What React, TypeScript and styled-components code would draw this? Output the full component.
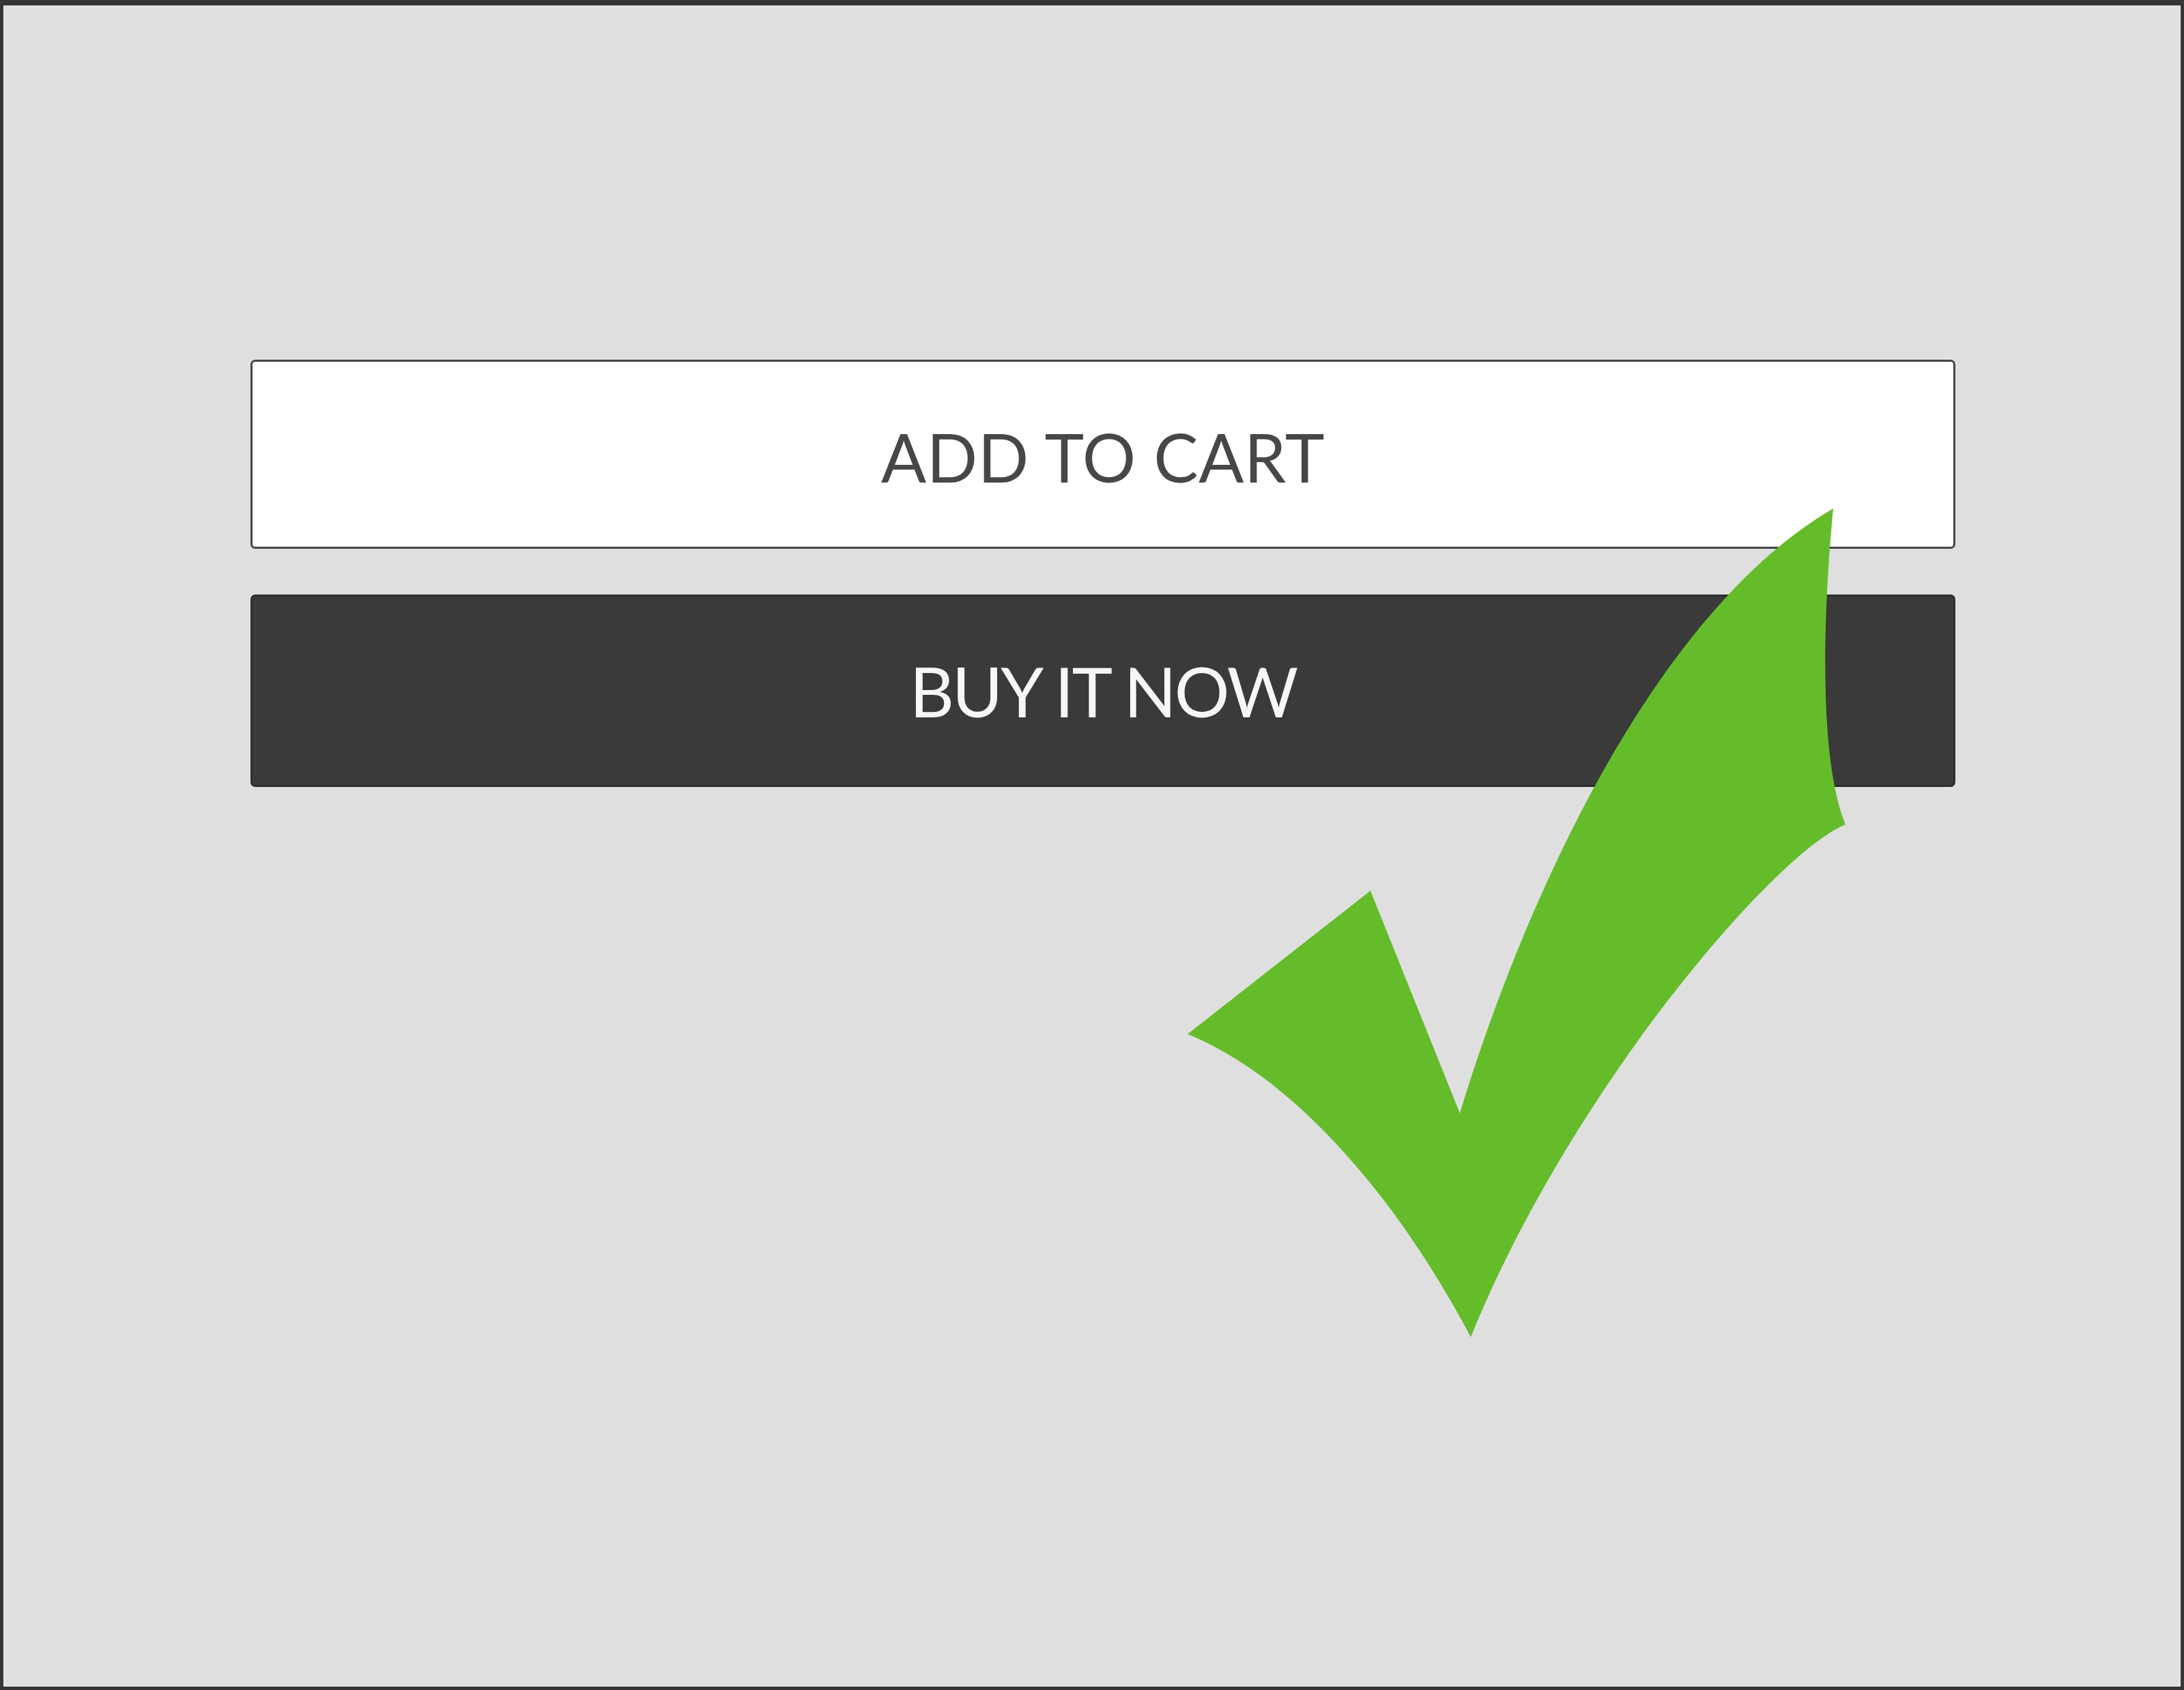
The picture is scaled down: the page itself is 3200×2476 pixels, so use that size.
import React from 'react';
import styled, { createGlobalStyle } from 'styled-components';

const GlobalStyle = createGlobalStyle`
  html, body {
    margin: 0;
    padding: 0;
    background: #dfdfdf;
  }
`;

const Frame = styled.div`
  position: relative;
  box-sizing: border-box;
  width: 3200px;
  height: 2476px;
  background: #dfdfdf;
  border-style: solid;
  border-color: #363636;
  border-width: 8px 5px 5px 5px;
  box-shadow: inset 0 0 0 2px #e9e9e9;
  overflow: hidden;
`;

const ButtonStack = styled.div`
  display: flex;
  flex-direction: column;
  gap: 67px;
  padding: 519px 330px 0 362px;
`;

const ActionButton = styled.button<{ $primary?: boolean }>`
  display: flex;
  align-items: center;
  justify-content: center;
  box-sizing: border-box;
  width: 100%;
  height: ${(p) => (p.$primary ? '282px' : '277px')};
  margin: 0;
  padding: ${(p) => (p.$primary ? '0' : '6px 0 0')};
  border: 3px solid ${(p) => (p.$primary ? '#2e2e2e' : '#454545')};
  border-radius: 7px;
  background: ${(p) => (p.$primary ? '#3a3a3a' : '#ffffff')};
  color: ${(p) => (p.$primary ? '#f7f7f7' : '#474747')};
  font-family: Lato, 'Open Sans', sans-serif;
  font-weight: 400;
  font-size: ${(p) => (p.$primary ? '101px' : '98px')};
  letter-spacing: ${(p) => (p.$primary ? '-0.03em' : '0.005em')};
  line-height: 1;
  cursor: pointer;
`;

const CheckOverlay = styled.svg`
  position: absolute;
  left: -5px;
  top: -8px;
  width: 3200px;
  height: 2476px;
  pointer-events: none;
`;

const App: React.FC = () => {
  return (
    <>
      <GlobalStyle />
      <Frame>
        <ButtonStack>
          <ActionButton>ADD TO CART</ActionButton>
          <ActionButton $primary>BUY IT NOW</ActionButton>
        </ButtonStack>
        <CheckOverlay viewBox="0 0 3200 2476">
          <path
            fill="#65bc2b"
            d="M1740 1515 L2008 1305 L2139 1631 C2230 1330 2420 900 2686 745 C2675 860 2660 1100 2704 1208 C2600 1250 2300 1600 2155 1959 C2050 1760 1900 1580 1740 1515 Z"
          />
        </CheckOverlay>
      </Frame>
    </>
  );
};

export default App;
